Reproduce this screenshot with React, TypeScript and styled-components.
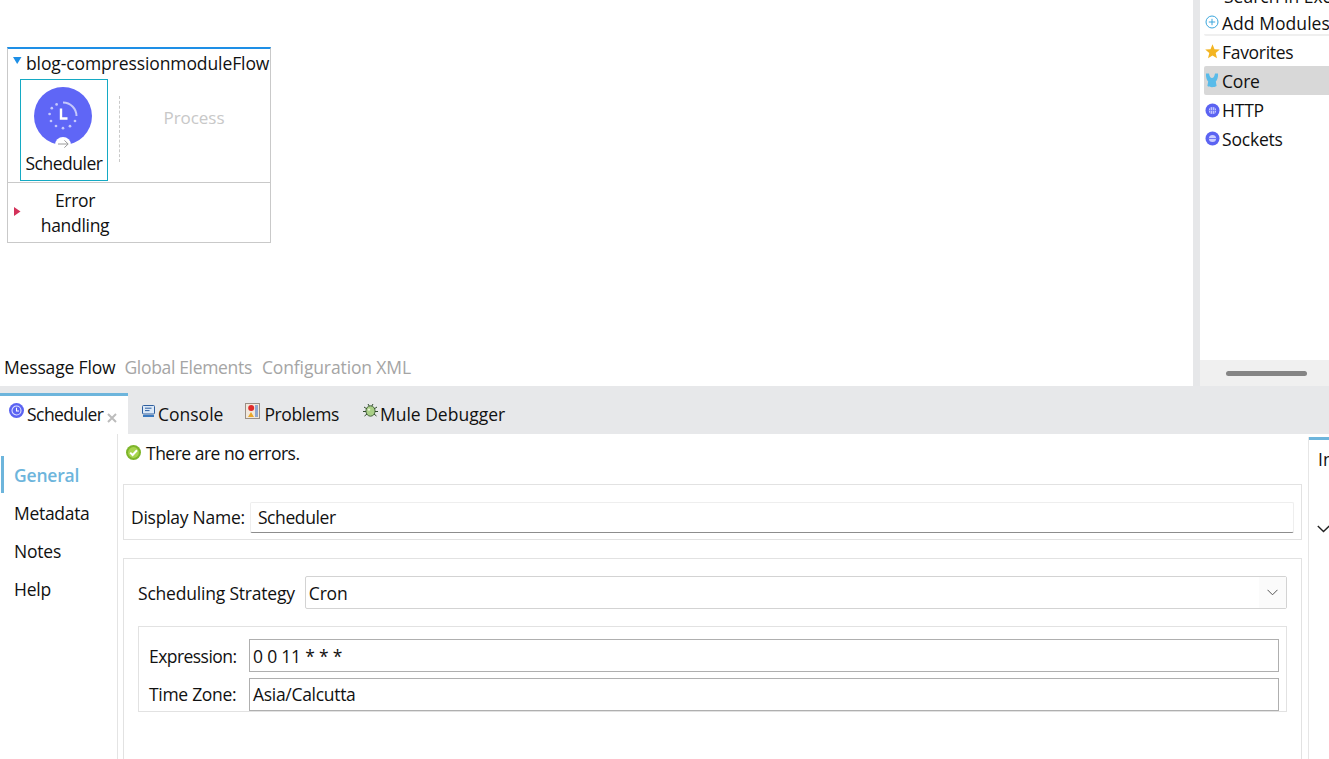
import React from "react";
import styled, { createGlobalStyle } from "styled-components";

const Global = createGlobalStyle`
  html, body { margin: 0; padding: 0; background: #fff; height: 100%; overflow: hidden; }
  body { font-family: "Open Sans", "Noto Sans", "Liberation Sans", sans-serif; font-size: 17.5px; color: #111; }
  #root { height: 100%; }
`;
const Page = styled.div`width:1329px;height:759px;overflow:hidden;display:flex;flex-direction:column;`;
const Txt = styled.span<{ $ls?: number }>`letter-spacing:${p => p.$ls ?? 0}px;white-space:nowrap;`;
const Top = styled.div`height:386px;display:flex;flex:none;`;
const Canvas = styled.div`width:1193px;flex:none;display:flex;flex-direction:column;justify-content:space-between;padding:47px 0 7px 0;box-sizing:border-box;`;
const FlowCard = styled.div`width:264px;height:196px;margin-left:7px;box-sizing:border-box;border:1px solid #c9c9c9;border-top:2px solid #1e8fe6;background:#fff;display:flex;flex-direction:column;`;
const FlowTitle = styled.div`height:29px;flex:none;box-sizing:border-box;display:flex;align-items:center;padding:0 0 2px 5px;gap:4px;white-space:nowrap;`;
const FlowBody = styled.div`height:103px;flex:none;display:flex;align-items:flex-start;padding:1px 0 0 12px;border-bottom:1px solid #c9c9c9;`;
const Selected = styled.div`width:88px;height:102px;box-sizing:border-box;border:1px solid #14aac4;display:flex;flex-direction:column;align-items:center;padding-top:7px;flex:none;`;
const CompLabel = styled.div`line-height:24px;letter-spacing:-.48px;`;
const DashLine = styled.div`height:66px;margin:17px 0 0 11px;border-left:1px dashed #c9c9c9;`;
const Process = styled.div`flex:1;text-align:center;color:#c8c8c8;font-size:17px;margin:27px 0 0 0;padding-right:2px;letter-spacing:-.05px;`;
const ErrorRow = styled.div`flex:1;display:flex;align-items:center;padding-left:6px;`;
const ErrorText = styled.div`width:122px;text-align:center;line-height:25px;letter-spacing:-.3px;margin-left:-7px;`;
const Tabs = styled.div`display:flex;padding-left:4px;white-space:nowrap;line-height:24px;`;
const ViewTab = styled(Txt)<{ $on?: boolean; $mr?: number }>`color:${p => (p.$on ? "#111" : "#a5a5a5")};margin-right:${p => p.$mr ?? 0}px;`;
const Divider = styled.div`width:7px;flex:none;background:#e6e7e9;`;
const Palette = styled.div`flex:1;display:flex;flex-direction:column;min-width:0;`;
const PaletteList = styled.div`flex:1;overflow:hidden;padding:0 0 0 4px;`;
const Cut = styled.div`height:8px;line-height:0;padding-left:20px;white-space:nowrap;overflow:hidden;`;
const CutText = styled.span`display:block;margin-top:-4px;line-height:0;`;
const PaletteItem = styled.div<{ $on?: boolean; $sep?: boolean }>`
  height:29px;display:flex;align-items:center;gap:1px;white-space:nowrap;border-radius:2px 0 0 2px;box-sizing:border-box;padding-top:1px;
  background:${p => (p.$on ? "#d8d8d8" : "transparent")};
  ${p => (p.$sep ? "height:28px;margin-bottom:1px;border-bottom:2px solid #efefef;padding-top:3px;" : "")}
`;
const IconSlot = styled.span<{ $top?: number }>`width:16px;height:16px;flex:none;display:flex;align-self:flex-start;margin-top:${p => p.$top ?? 6}px;padding-left:1px;`;
const ScrollTrack = styled.div`height:26px;flex:none;background:#f0f0f0;display:flex;align-items:center;justify-content:center;padding-left:3px;`;
const Thumb = styled.div`width:81px;height:5px;border-radius:3px;background:#858585;`;
const TabBar = styled.div`height:48px;flex:none;background:#e7e8ea;display:flex;align-items:flex-end;white-space:nowrap;`;
const ActiveTab = styled.div`width:128px;height:41px;box-sizing:border-box;background:#fff;border-top:3px solid #6db5dc;display:flex;align-items:center;padding:0 0 3px 9px;gap:3px;margin-right:14px;`;
const ViewTabItem = styled.div<{ $mr?: number; $gap?: number }>`height:38px;box-sizing:border-box;padding-bottom:3px;display:flex;align-items:center;gap:${p => p.$gap ?? 3}px;margin-right:${p => p.$mr ?? 0}px;`;
const CloseIcon = styled.svg`margin:9px 0 0 1px;flex:none;`;
const TabIcon = styled.svg`flex:none;margin-top:-6px;`;
const Lower = styled.div`flex:1;display:flex;min-height:0;`;
const SideNav = styled.div`width:117px;flex:none;border-right:1px solid #e4e4e4;padding-top:22px;`;
const NavItem = styled.div<{ $on?: boolean }>`
  height:38px;display:flex;align-items:center;padding-left:14px;
  ${p => (p.$on ? "border-left:3px solid #6db5dc;box-sizing:border-box;height:37px;margin:0 0 1px 1px;padding-left:10px;color:#6db5dc;font-weight:600;" : "")}
`;
const Main = styled.div`flex:1;padding:0 0 0 5px;min-width:0;display:flex;flex-direction:column;overflow:hidden;`;
const Status = styled.div`height:38px;flex:none;display:flex;align-items:center;gap:5px;padding:0 0 0 3px;margin-bottom:12px;`;
const Section = styled.div`border:1px solid #e2e2e2;box-sizing:border-box;width:1179px;flex:none;`;
const NameSection = styled(Section)`height:56px;display:flex;align-items:center;padding:10px 7px 0 7px;gap:5px;margin-bottom:18px;`;
const NameInput = styled.div`flex:1;height:31px;box-sizing:border-box;border:1px solid #eee;border-bottom:1px solid #8d8d8d;padding-left:7px;display:flex;align-items:center;border-radius:2px;`;
const SchedSection = styled(Section)`height:240px;padding:17px 14px 0 14px;`;
const StrategyRow = styled.div`display:flex;align-items:center;gap:10px;`;
const Select = styled.div`flex:1;height:33px;box-sizing:border-box;border:1px solid #d3d3d3;border-radius:2px;padding-left:3px;display:flex;align-items:center;justify-content:space-between;`;
const Chevron = styled.span`width:27px;height:31px;background:#fbfbfb;display:flex;align-items:center;justify-content:center;`;
const CronBox = styled.div`margin-top:17px;border:1px solid #e2e2e2;height:86px;box-sizing:border-box;padding:12px 7px 0 10px;display:grid;grid-template-columns:100px 1fr;row-gap:5px;align-items:center;`;
const CronInput = styled.div`height:33px;box-sizing:border-box;border:1px solid #afafaf;padding-left:3px;display:flex;align-items:center;`;
const Outline = styled.div`width:20px;flex:none;border-left:1px solid #e6e6e6;margin-top:3px;overflow:hidden;`;
const OutlineTop = styled.div`height:3px;background:#6db5dc;margin-bottom:7px;`;
const OutlineLabel = styled.div`padding-left:9px;white-space:nowrap;line-height:24px;`;
const OutlineChevron = styled.div`padding-left:8px;margin-top:54px;line-height:0;`;
const Triangle = styled.svg`flex:none;`;

const ClockBadge = () => (
  <TabIcon width="15" height="15" viewBox="0 0 15 15">
    <circle cx="7.5" cy="7.5" r="7.5" fill="#5b63f2" />
    <circle cx="7.5" cy="7.5" r="4.5" fill="none" stroke="#dfe1ff" strokeWidth="1.1" />
    <path d="M7.5 4.8V8H10" fill="none" stroke="#fff" strokeWidth="1.1" />
  </TabIcon>
);
const GlobeBadge = () => (
  <svg width="15" height="15" viewBox="0 0 15 15">
    <circle cx="7.5" cy="7.5" r="7" fill="#5b63f2" />
    <circle cx="7.5" cy="7.5" r="3.6" fill="#c9ccff" />
    <path d="M3.8 7.5H11.2M7.5 3.8V11.2M5.6 4.4V10.6M9.4 4.4V10.6" stroke="#6f76f4" strokeWidth=".8" />
  </svg>
);
const SocketBadge = () => (
  <svg width="15" height="15" viewBox="0 0 15 15">
    <circle cx="7.5" cy="7.5" r="7" fill="#5b63f2" />
    <circle cx="7.5" cy="7.5" r="3.6" fill="#c9ccff" />
    <path d="M3.6 7.5H11.4" stroke="#6f76f4" strokeWidth="1" />
  </svg>
);
const Scheduler = () => (
  <svg width="58" height="64" viewBox="0 0 58 64" style={{ flex: "none", marginRight: 2 }}>
    <circle cx="29" cy="29" r="29" fill="#5f66f6" />
    <circle cx="29" cy="58" r="8" fill="#fff" />
    <path d="M24 57H34M30.4 53.4L34.2 57L30.4 60.6" fill="none" stroke="#9a9a9a" strokeWidth="1" />
    <path d="M29 15.5A13.5 13.5 0 0 1 42.5 29" fill="none" stroke="#c5c8fb" strokeWidth="2" />
    <path d="M27 21.5V31.5H33.5" fill="none" stroke="#fff" strokeWidth="2.4" />
    {[[22.6, 17.4], [17.8, 21.2], [15.6, 27], [17, 34], [22, 39], [29, 41.2], [36, 39.2], [41, 34]].map(([x, y]) => (
      <circle key={`${x}`} cx={x} cy={y} r="1.35" fill="#c5c8fb" />
    ))}
  </svg>
);

export default function App() {
  return (
    <Page>
      <Global />
      <Top>
        <Canvas>
          <FlowCard>
            <FlowTitle>
              <Triangle width="9" height="8" viewBox="0 0 9 8" style={{ marginTop: -3 }}><path d="M0 0H8.5L4.2 7Z" fill="#1e8fe6" /></Triangle>
              <Txt $ls={-0.1}>blog-compressionmoduleFlow</Txt>
            </FlowTitle>
            <FlowBody>
              <Selected>
                <Scheduler />
                <CompLabel>Scheduler</CompLabel>
              </Selected>
              <DashLine />
              <Process>Process</Process>
            </FlowBody>
            <ErrorRow>
              <Triangle width="7" height="9" viewBox="0 0 7 9" style={{ marginTop: -2 }}><path d="M0 0L6.5 4.5L0 9Z" fill="#d3325a" /></Triangle>
              <ErrorText>Error<br />handling</ErrorText>
            </ErrorRow>
          </FlowCard>
          <Tabs>
            <ViewTab $on $ls={-0.16} $mr={9}>Message Flow</ViewTab>
            <ViewTab $ls={-0.33} $mr={10}>Global Elements</ViewTab>
            <ViewTab $ls={-0.12}>Configuration XML</ViewTab>
          </Tabs>
        </Canvas>
        <Divider />
        <Palette>
          <PaletteList>
            <Cut><CutText>Search in Exc</CutText></Cut>
            <PaletteItem $sep>
              <IconSlot $top={4}>
                <svg width="14" height="14" viewBox="0 0 14 14"><circle cx="7" cy="7" r="6" fill="none" stroke="#3aa6dd" strokeWidth="1" /><path d="M3.8 7H10.2M7 3.8V10.2" stroke="#3aa6dd" strokeWidth="1" /></svg>
              </IconSlot>
              <Txt $ls={0.05}>Add Modules</Txt>
            </PaletteItem>
            <PaletteItem>
              <IconSlot>
                <svg width="15" height="15" viewBox="0 0 15 15"><path d="M7.5 .3L9.5 5.2L14.8 5.6L10.7 9L12 14.3L7.5 11.5L3 14.3L4.3 9L.2 5.6L5.5 5.2Z" fill="#f3b522" /></svg>
              </IconSlot>
              <Txt $ls={-0.3}>Favorites</Txt>
            </PaletteItem>
            <PaletteItem $on>
              <IconSlot>
                <svg width="14" height="15" viewBox="0 0 14 15"><path d="M1 .5L4 .5C4.4 3 5.4 5 7 5C8.6 5 9.6 3 10 .5L13 .5C13.4 4 12.2 7 10.8 8.6L11.6 13C9.2 14.6 4.8 14.6 2.4 13L3.2 8.6C1.8 7 .6 4 1 .5Z" fill="#59bbe9" /></svg>
              </IconSlot>
              <Txt $ls={-0.2}>Core</Txt>
            </PaletteItem>
            <PaletteItem>
              <IconSlot $top={7}><GlobeBadge /></IconSlot>
              <Txt $ls={-0.2}>HTTP</Txt>
            </PaletteItem>
            <PaletteItem>
              <IconSlot><SocketBadge /></IconSlot>
              <Txt $ls={-0.2}>Sockets</Txt>
            </PaletteItem>
          </PaletteList>
          <ScrollTrack><Thumb /></ScrollTrack>
        </Palette>
      </Top>
      <TabBar>
        <ActiveTab>
          <ClockBadge />
          <Txt $ls={-0.55}>Scheduler</Txt>
          <CloseIcon width="10" height="10" viewBox="0 0 10 10"><path d="M1 1L9 9M9 1L1 9" stroke="#bcbcbc" strokeWidth="2" /></CloseIcon>
        </ActiveTab>
        <ViewTabItem $mr={22}>
          <TabIcon width="13" height="12" viewBox="0 0 13 12">
            <rect x=".5" y=".5" width="12" height="8.5" rx="1" fill="#dbe8f7" stroke="#2f5f9f" />
            <path d="M3 3.2H9.5M3 5.6H7.5" stroke="#2f5f9f" />
            <path d="M1 11H12" stroke="#3b79bf" strokeWidth="2" />
          </TabIcon>
          <Txt>Console</Txt>
        </ViewTabItem>
        <ViewTabItem $mr={24} $gap={4}>
          <TabIcon width="15" height="16" viewBox="0 0 15 16">
            <rect x=".5" y=".5" width="14" height="15" fill="#f2e8dc" stroke="#9a8f86" />
            <rect x="10" y="2" width="3" height="12" fill="#8ea6cf" />
            <circle cx="6.2" cy="5" r="3" fill="#e02a2a" />
            <path d="M3 14L6 9L9 14Z" fill="#e9a72b" />
          </TabIcon>
          <Txt $ls={-0.4}>Problems</Txt>
        </ViewTabItem>
        <ViewTabItem $gap={2}>
          <TabIcon width="15" height="15" viewBox="0 0 15 15">
            <path d="M1 4L4 6M14 4L11 6M0 8.5H3M15 8.5H12M1.5 13L4 11M13.5 13L11 11M5 1L6.5 3.5M10 1L8.5 3.5" stroke="#2f4a2a" strokeWidth="1" />
            <ellipse cx="7.5" cy="8" rx="4.6" ry="5.2" fill="#a9cf86" stroke="#2f4a2a" strokeWidth=".8" />
            <circle cx="6" cy="6.6" r="1.2" fill="#e8f2d5" />
          </TabIcon>
          <Txt>Mule Debugger</Txt>
        </ViewTabItem>
      </TabBar>
      <Lower>
        <SideNav>
          <NavItem $on><Txt $ls={-0.2}>General</Txt></NavItem>
          <NavItem><Txt $ls={-0.3}>Metadata</Txt></NavItem>
          <NavItem><Txt $ls={-0.2}>Notes</Txt></NavItem>
          <NavItem><Txt $ls={-0.2}>Help</Txt></NavItem>
        </SideNav>
        <Main>
          <Status>
            <svg width="15" height="15" viewBox="0 0 15 15" style={{ marginTop: -2, flex: "none" }}>
              <circle cx="7.5" cy="7.5" r="7.5" fill="#7db52a" />
              <circle cx="7.5" cy="7.5" r="5.4" fill="#a8d44e" />
              <path d="M4.2 7.6L6.6 10L11 5.2" fill="none" stroke="#fff" strokeWidth="2" />
            </svg>
            <Txt $ls={-0.5}>There are no errors.</Txt>
          </Status>
          <NameSection>
            <Txt $ls={-0.25}>Display Name:</Txt>
            <NameInput><Txt $ls={-0.4}>Scheduler</Txt></NameInput>
          </NameSection>
          <SchedSection>
            <StrategyRow>
              <Txt $ls={-0.2}>Scheduling Strategy</Txt>
              <Select>
                <Txt $ls={-0.2}>Cron</Txt>
                <Chevron>
                  <svg width="11" height="7" viewBox="0 0 11 7"><path d="M.5 .8L5.5 5.8L10.5 .8" fill="none" stroke="#555" strokeWidth="1" /></svg>
                </Chevron>
              </Select>
            </StrategyRow>
            <CronBox>
              <Txt $ls={-0.55}>Expression:</Txt>
              <CronInput><Txt $ls={-0.2}>0 0 11 * * *</Txt></CronInput>
              <Txt $ls={-0.3}>Time Zone:</Txt>
              <CronInput><Txt $ls={-0.3}>Asia/Calcutta</Txt></CronInput>
            </CronBox>
          </SchedSection>
        </Main>
        <Outline>
          <OutlineTop />
          <OutlineLabel>In</OutlineLabel>
          <OutlineChevron>
            <svg width="13" height="8" viewBox="0 0 13 8"><path d="M.8 1L6.5 6.6L12.2 1" fill="none" stroke="#222" strokeWidth="1.4" /></svg>
          </OutlineChevron>
        </Outline>
      </Lower>
    </Page>
  );
}
